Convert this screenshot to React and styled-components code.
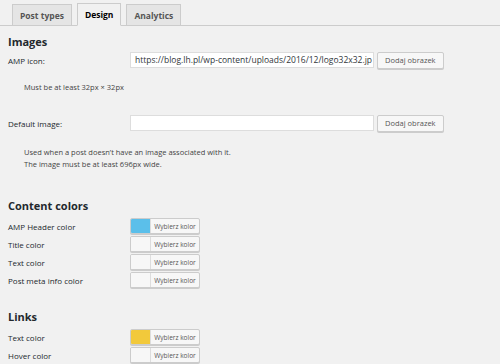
import React from "react";
import styled, { createGlobalStyle } from "styled-components";

const GlobalStyle = createGlobalStyle`
  html, body {
    margin: 0;
    padding: 0;
    background: #f1f1f1;
  }
  body {
    font-family: "Open Sans", "Noto Sans", sans-serif;
    color: #444;
    width: 500px;
    height: 364px;
    overflow: hidden;
  }
`;

const Page = styled.div`
  padding: 3px 0 0 0;
`;

const TabBar = styled.div`
  display: flex;
  align-items: flex-end;
  gap: 5px;
  padding-left: 12px;
  border-bottom: 1px solid #ccc;
  height: 22px;
`;

const Tab = styled.div`
  display: flex;
  align-items: center;
  justify-content: center;
  box-sizing: border-box;
  height: ${(p) => (p.$active ? "23px" : "21px")};
  margin-bottom: ${(p) => (p.$active ? "-1px" : "0")};
  padding: 0 7px;
  border: 1px solid #ccc;
  border-bottom: ${(p) => (p.$active ? "1px solid #f1f1f1" : "none")};
  background: ${(p) => (p.$active ? "#f1f1f1" : "#e5e5e5")};
  color: ${(p) => (p.$active ? "#000" : "#555")};
  font-size: 8.5px;
  font-weight: 700;
`;

const Content = styled.div`
  padding: 0 8px;
`;

const Heading = styled.h2`
  margin: ${(p) => p.$top || "10px"} 0 ${(p) => p.$bottom || "4px"};
  font-size: 11px;
  font-weight: 700;
  color: #23282d;
  line-height: 14px;
`;

const Row = styled.div`
  display: grid;
  grid-template-columns: 122px 1fr;
  align-items: center;
  min-height: ${(p) => p.$h || "18px"};
  margin-top: ${(p) => p.$top || "0"};
`;

const Label = styled.div`
  font-size: 8px;
  color: #23282d;
`;

const Field = styled.div`
  display: flex;
  align-items: center;
  gap: 3px;
`;

const TextInput = styled.div`
  box-sizing: border-box;
  width: 244px;
  height: 16px;
  padding: 0 3px 0 4px;
  background: #fff;
  border: 1px solid #ddd;
  font-size: 8.5px;
  line-height: 14px;
  color: #32373c;
  white-space: nowrap;
`;

const Button = styled.div`
  box-sizing: border-box;
  height: 17px;
  padding: 0 7px;
  display: flex;
  align-items: center;
  background: #f7f7f7;
  border: 1px solid #ccc;
  border-radius: 2px;
  box-shadow: 0 1px 0 #ccc;
  font-size: 7.5px;
  color: #555;
`;

const Description = styled.p`
  margin: ${(p) => p.$m || "0"};
  padding-left: 16px;
  font-size: 7.5px;
  line-height: 12px;
  color: #444;
`;

const Picker = styled.div`
  box-sizing: border-box;
  display: flex;
  width: 70px;
  height: 16px;
  border: 1px solid #ccc;
  border-radius: 2px;
  background: #f7f7f7;
  box-shadow: 0 1px 0 #ccc;
  overflow: hidden;
`;

const Swatch = styled.div`
  width: 19px;
  background: ${(p) => p.$color || "#f7f7f7"};
  border-right: 1px solid #ddd;
`;

const PickerText = styled.div`
  flex: 1;
  display: flex;
  align-items: center;
  justify-content: center;
  font-size: 6.5px;
  color: #555;
`;

const ColorRow = ({ label, color }) => (
  <Row>
    <Label>{label}</Label>
    <Picker>
      <Swatch $color={color} />
      <PickerText>Wybierz kolor</PickerText>
    </Picker>
  </Row>
);

export default function App() {
  return (
    <Page>
      <GlobalStyle />
      <TabBar>
        <Tab>Post types</Tab>
        <Tab $active>Design</Tab>
        <Tab>Analytics</Tab>
      </TabBar>
      <Content>
        <Heading $top="9px" $bottom="1px">Images</Heading>
        <Row $h="20px">
          <Label>AMP icon:</Label>
          <Field>
            <TextInput>https://blog.lh.pl/wp-content/uploads/2016/12/logo32x32.jp</TextInput>
            <Button>Dodaj obrazek</Button>
          </Field>
        </Row>
        <Description $m="11px 0 0">Must be at least 32px × 32px</Description>
        <Row $h="20px" $top="20px">
          <Label>Default image:</Label>
          <Field>
            <TextInput />
            <Button>Dodaj obrazek</Button>
          </Field>
        </Row>
        <Description $m="13px 0 0">
          Used when a post doesn’t have an image associated with it.
          <br />
          The image must be at least 696px wide.
        </Description>
        <Heading $top="29px">Content colors</Heading>
        <ColorRow label="AMP Header color" color="#5bbfea" />
        <ColorRow label="Title color" />
        <ColorRow label="Text color" />
        <ColorRow label="Post meta info color" />
        <Heading $top="21px">Links</Heading>
        <ColorRow label="Text color" color="#f2c93b" />
        <ColorRow label="Hover color" />
      </Content>
    </Page>
  );
}
